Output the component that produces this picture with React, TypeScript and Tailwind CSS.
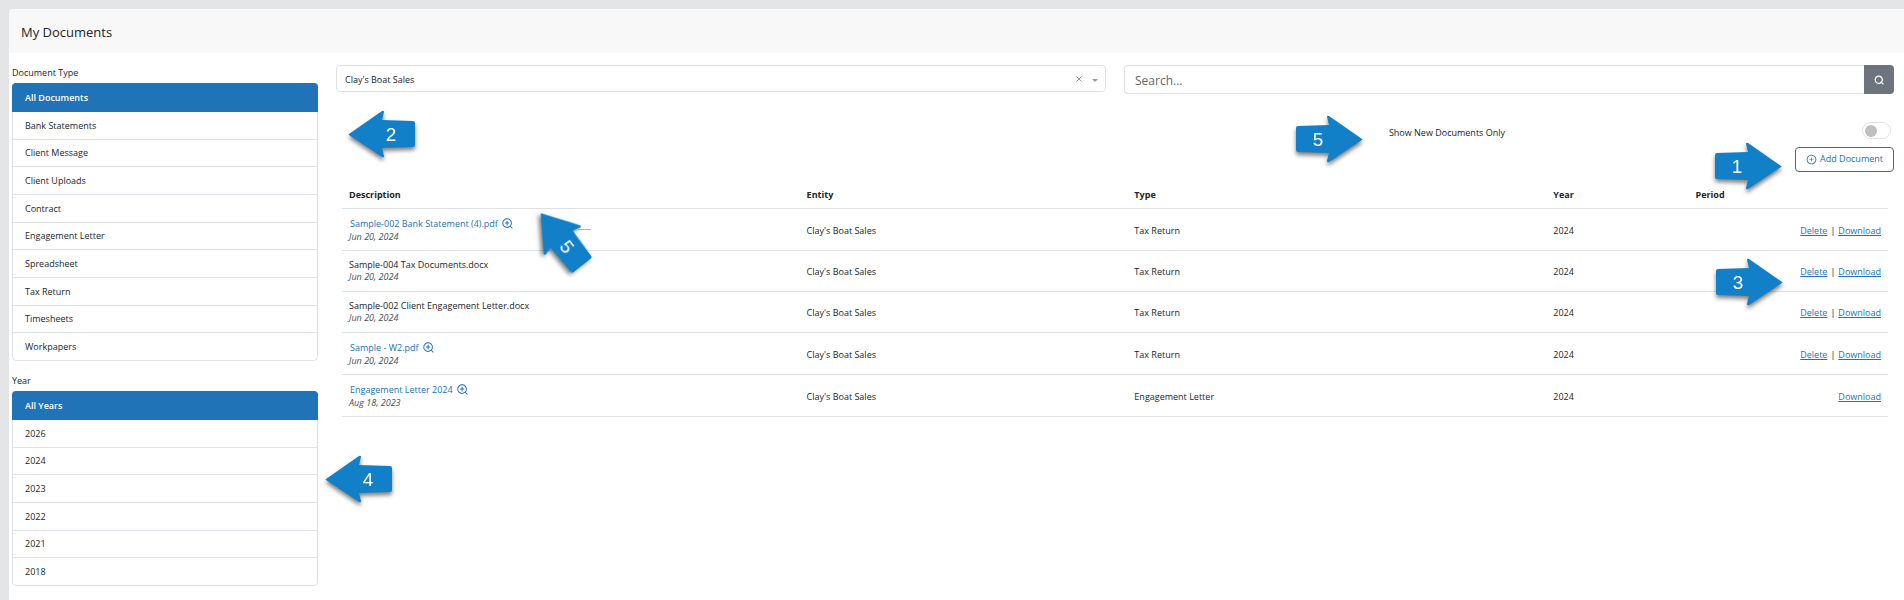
import React, { useState } from "react";
import { AiOutlinePlusCircle, AiOutlineZoomIn } from "react-icons/ai";

interface Doc {
  name: string;
  date: string;
  entity: string;
  type: string;
  year: string;
  preview: boolean;
  canDelete: boolean;
}

const documentTypes = [
  "All Documents",
  "Bank Statements",
  "Client Message",
  "Client Uploads",
  "Contract",
  "Engagement Letter",
  "Spreadsheet",
  "Tax Return",
  "Timesheets",
  "Workpapers",
];

const years = ["All Years", "2026", "2024", "2023", "2022", "2021", "2018"];

const entity = "Clay's Boat Sales";

const docs: Doc[] = [
  { name: "Sample-002 Bank Statement (4).pdf", date: "Jun 20, 2024", entity, type: "Tax Return", year: "2024", preview: true, canDelete: true },
  { name: "Sample-004 Tax Documents.docx", date: "Jun 20, 2024", entity, type: "Tax Return", year: "2024", preview: false, canDelete: true },
  { name: "Sample-002 Client Engagement Letter.docx", date: "Jun 20, 2024", entity, type: "Tax Return", year: "2024", preview: false, canDelete: true },
  { name: "Sample - W2.pdf", date: "Jun 20, 2024", entity, type: "Tax Return", year: "2024", preview: true, canDelete: true },
  { name: "Engagement Letter 2024", date: "Aug 18, 2023", entity, type: "Engagement Letter", year: "2024", preview: true, canDelete: false },
];

interface FilterListProps {
  title: string;
  items: string[];
  className: string;
}

function FilterList({ title, items, className }: FilterListProps) {
  const [active, setActive] = useState(items[0]);

  return (
    <section>
      <h2 className="h-5 leading-5">{title}</h2>
      <ul className={`flex flex-col rounded-[4px] border border-[#dee2e6] ${className}`}>
        {items.map((item) => (
          <li
            key={item}
            className="group flex flex-1 border-b border-[#dee2e6] first:-mx-px first:-mt-px first:h-[29px] first:flex-none first:border-b-0 last:border-b-0"
          >
            <button
              type="button"
              onClick={() => setActive(item)}
              className={
                item === active
                  ? "w-full bg-[#2073b7] px-[13px] text-left font-semibold text-white group-first:rounded-t-[4px] group-last:rounded-b-[3px]"
                  : "w-full px-3 text-left"
              }
            >
              {item}
            </button>
          </li>
        ))}
      </ul>
    </section>
  );
}

interface CalloutProps {
  label: string;
  className: string;
  right?: boolean;
}

// Numbered arrow pinned over the page
function Callout({ label, className, right }: CalloutProps) {
  return (
    <svg
      width="67"
      height="48"
      viewBox="0 0 67 48"
      className={`pointer-events-none absolute overflow-visible drop-shadow-[0_3px_2px_rgba(0,0,0,0.5)] ${className}`}
    >
      <path
        d="M1 24 L34 1 Q36 0 36 2 L34 10 L65 11 Q67 11 67 13 V35 Q67 37 65 37 L34 38 L36 46 Q36 48 34 47 L1 25 Q0 24 1 24Z"
        fill="#1180c8"
        transform={right ? "matrix(-1 0 0 1 67 0)" : undefined}
      />
      <text x={right ? 22 : 43} y="31" textAnchor="middle" fill="#fff" fontSize="19" fontFamily="Liberation Sans, sans-serif">
        {label}
      </text>
    </svg>
  );
}

export default function App() {
  const [search, setSearch] = useState("");
  const [onlyNew, setOnlyNew] = useState(false);

  return (
    <div className="relative min-h-screen overflow-hidden bg-[#e4e5e7] pt-[9px] pl-[9px] font-['Open_Sans','Noto_Sans',sans-serif] text-[9px] text-[#212529]">
      <main className="min-h-[591px] rounded-tl-[4px] bg-white">
        <header className="rounded-tl-[4px] bg-[#f8f8f8] px-3 pt-[13px] pb-[11px]">
          <h1 className="text-[13px] leading-5">My Documents</h1>
        </header>

        <div className="grid grid-cols-[306fr_1558fr] gap-[18px] pt-[10px] pr-[10px] pl-[3px]">
          <aside className="flex flex-col gap-[10px]">
            <FilterList title="Document Type" items={documentTypes} className="min-h-[278px]" />
            <FilterList title="Year" items={years} className="min-h-[195px]" />
          </aside>

          <div className="pt-[2px]">
            <div className="grid grid-cols-2 items-start gap-[18px]">
              <div className="relative">
                <select aria-label="Entity" className="h-[27px] w-full appearance-none rounded-[4px] border border-[#dee2e6] bg-white px-2 pt-[2px]">
                  <option>Clay's Boat Sales</option>
                </select>
                <div className="pointer-events-none absolute inset-y-0 right-2 flex items-center gap-[10px] text-[#999]">
                  <svg width="6" height="6" viewBox="0 0 6 6" stroke="currentColor">
                    <path d="M0.5 0.5 5.5 5.5M5.5 0.5 0.5 5.5" />
                  </svg>
                  <svg width="6" height="3" viewBox="0 0 6 3" fill="currentColor" className="mt-1">
                    <path d="M0 0H6L3 3Z" />
                  </svg>
                </div>
              </div>

              <div>
                <div className="flex h-[29px]">
                  <input
                    type="text"
                    aria-label="Search"
                    placeholder="Search..."
                    value={search}
                    onChange={(e) => setSearch(e.target.value)}
                    className="min-w-0 flex-1 rounded-l-[4px] border border-r-0 border-[#dee2e6] px-[10px] pt-[2px] text-[12px] placeholder:text-[#5f666d]"
                  />
                  <button type="button" aria-label="Search" className="flex w-[30px] items-center justify-center rounded-r-[4px] bg-[#6c757d] text-white">
                    <svg width="10" height="10" viewBox="0 0 10 10" fill="none" stroke="currentColor" strokeWidth="1.2">
                      <circle cx="4.8" cy="4.8" r="3.6" />
                      <path d="M6.6 6.6 9.4 9.2" />
                    </svg>
                  </button>
                </div>

                <div className="mt-7 flex items-center justify-between pr-[3px] pl-[34.4%]">
                  <label htmlFor="only-new" className="pt-1">Show New Documents Only</label>
                  <input
                    id="only-new"
                    type="checkbox"
                    role="switch"
                    checked={onlyNew}
                    onChange={(e) => setOnlyNew(e.target.checked)}
                    className="flex h-[17px] w-[29px] appearance-none items-center rounded-full border border-[#dee2e6] px-[2px] before:size-3 before:rounded-full before:bg-[#bfbfbf] checked:justify-end checked:before:bg-[#2073b7]"
                  />
                </div>

                <div className="mt-[7px] flex justify-end">
                  <button type="button" className="flex h-[25px] items-center gap-[3px] rounded-[4px] border border-[#2073b7] px-[10px] text-[#2073b7]">
                    <AiOutlinePlusCircle size={11} />
                    Add Document
                  </button>
                </div>
              </div>
            </div>

            <div className="px-[6px] pt-[10px]">
              <table className="w-full table-fixed text-left">
                <thead>
                  <tr className="h-[27px] border-b border-[#dee2e6]">
                    <th className="w-[29.6%] px-[7px] font-bold">Description</th>
                    <th className="w-[21.2%] px-[7px] font-bold">Entity</th>
                    <th className="w-[27.1%] px-[7px] font-bold">Type</th>
                    <th className="w-[9.2%] px-[7px] font-bold">Year</th>
                    <th className="px-[7px] font-bold">Period</th>
                    <th aria-label="Actions" />
                  </tr>
                </thead>
                <tbody>
                  {docs.map((doc) => (
                    <tr key={doc.name} className={doc.preview ? "h-[42px] border-b border-[#dee2e6]" : "h-[41px] border-b border-[#dee2e6]"}>
                      <td className="px-[7px]">
                        {doc.preview ? (
                          <a href="#" className="flex h-[14px] items-center gap-[3px] pl-px text-[#2073b7]">
                            {doc.name}
                            <AiOutlineZoomIn size={13} />
                          </a>
                        ) : (
                          <div className="h-3 leading-3">{doc.name}</div>
                        )}
                        <div className="h-3 leading-3 text-[#495057] italic">{doc.date}</div>
                      </td>
                      <td className="px-[7px] pt-[2px]">{doc.entity}</td>
                      <td className="px-[7px] pt-[2px]">{doc.type}</td>
                      <td className="px-[7px] pt-[2px]">{doc.year}</td>
                      <td className="px-[7px] pt-[2px]" />
                      <td className="px-[7px] pt-[2px] text-right whitespace-nowrap">
                        {doc.canDelete && (
                          <>
                            <a href="#" className="text-[#2073b7] underline">Delete</a>
                            <span className="px-[3px]">|</span>
                          </>
                        )}
                        <a href="#" className="text-[#2073b7] underline">Download</a>
                      </td>
                    </tr>
                  ))}
                </tbody>
              </table>
            </div>
          </div>
        </div>
      </main>

      <div className="absolute top-[229px] left-[578px] h-px w-[13px] bg-[#8fbce2]" />
      <Callout label="2" className="top-[110px] left-[348px]" />
      <Callout label="4" className="top-[455px] left-[325px]" />
      <Callout label="5" className="top-[215px] left-[528px] rotate-[52deg]" />
      <Callout label="5" right className="top-[115px] left-[1296px]" />
      <Callout label="1" right className="top-[142px] left-[1715px]" />
      <Callout label="3" right className="top-[258px] left-[1716px]" />
    </div>
  );
}
